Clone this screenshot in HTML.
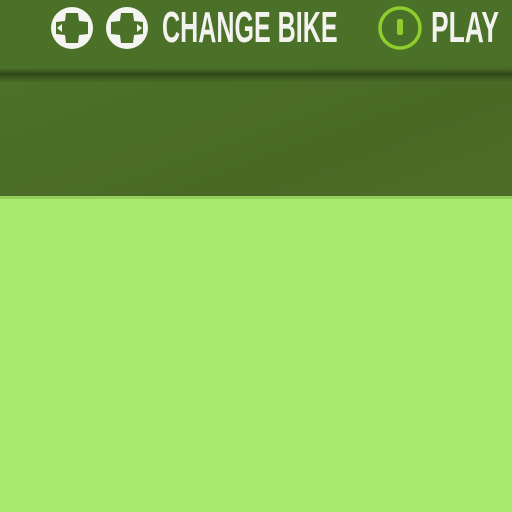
<!DOCTYPE html>
<html><head><style>
html,body{margin:0;padding:0;width:512px;height:512px;overflow:hidden;background:#a8e86e;}
.top{position:absolute;left:0;top:0;width:512px;height:198px;background:linear-gradient(160deg,#4f7529 0%,#4b6e27 40%,#486a25 70%,#4b6d27 100%);}
.bar{position:absolute;left:0;top:0;width:512px;height:66px;background:#4b7028;}
.line{position:absolute;left:0;top:68px;width:512px;height:14px;background:linear-gradient(#4c6f28,#2f4618 45%,#3d5a1f 70%,#4a6a26);}
.t{position:absolute;top:5px;color:#f2f2ee;font-family:"Liberation Sans Narrow","Liberation Sans",sans-serif;font-weight:bold;font-size:44px;line-height:46px;transform-origin:left top;white-space:nowrap;}
.edge{position:absolute;left:0;top:196px;width:512px;height:3px;background:#93cf5c;}
</style></head><body>
<div class="top"></div><div class="bar"></div><div class="line"></div><div class="edge"></div>
<svg style="position:absolute;left:0;top:0" width="512" height="60">
 <g fill="#f4f4f0">
  <circle cx="72" cy="28" r="21"/>
  <circle cx="127" cy="28" r="21"/>
 </g>
 <g fill="#4b7028">
  <path d="M66 13 H78 L79 21 L88 22 V34 L79 35 L78 43 H66 L65 35 L56 34 V22 L65 21 Z"/>
  <path d="M121 13 H133 L134 21 L143 22 V34 L134 35 L133 43 H121 L120 35 L111 34 V22 L120 21 Z"/>
 </g>
 <g fill="#f4f4f0">
  <path d="M57 28 L62 24 V32 Z"/>
  <path d="M142 28 L137 24 V32 Z"/>
 </g>
 <circle cx="400" cy="28" r="20" fill="none" stroke="#8fcd2f" stroke-width="3.5"/>
 <rect x="397" y="19" width="6" height="16" rx="2" fill="#8fcd2f"/>
</svg>
<div class="t" style="left:162px;transform:scaleX(0.57)">CHANGE BIKE</div>
<div class="t" style="left:431px;transform:scaleX(0.60)">PLAY</div>
</body></html>
